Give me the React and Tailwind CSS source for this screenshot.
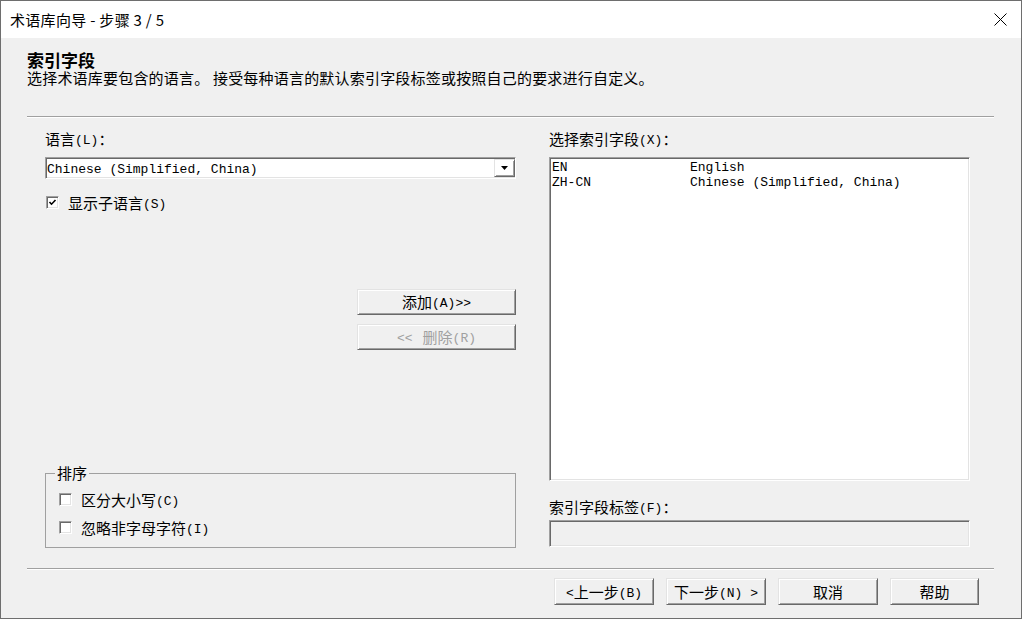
import React from 'react';

// Latin runs in the dialog use a half-width mono face, CJK stays in Noto
const M = ({ children }) => (
  <span className="relative -top-px leading-[0px] font-['Liberation_Mono',monospace] text-[13px]">{children}</span>
);

const sunken =
  'border border-t-[#a0a0a0] border-l-[#a0a0a0] border-b-white border-r-white shadow-[inset_1px_1px_0_#696969,inset_-1px_-1px_0_#e3e3e3]';
const raised =
  'border border-t-[#e3e3e3] border-l-[#e3e3e3] border-b-[#696969] border-r-[#696969] shadow-[inset_1px_1px_0_#ffffff,inset_-1px_-1px_0_#a0a0a0]';

function CheckBox({ checked, label }) {
  return (
    <div className="flex items-center h-[15px] leading-[15px]">
      <div className={`w-[13px] h-[13px] bg-white flex items-center justify-center ${sunken}`}>
        {checked && (
          <svg width="9" height="9" viewBox="0 0 9 9">
            <polyline points="1.5,4 3.5,6.2 7.5,2" fill="none" stroke="#000" strokeWidth="1.6" />
          </svg>
        )}
      </div>
      <span className="ml-[9px]">{label}</span>
    </div>
  );
}

function Button({ children, className = '', disabled }) {
  return (
    <div
      className={`flex items-center justify-center bg-[#f0f0f0] ${raised} ${
        disabled ? 'text-[#a0a0a0]' : 'text-black'
      } ${className}`}
    >
      <span className="leading-[18px] whitespace-pre">{children}</span>
    </div>
  );
}

export default function App() {
  return (
    <div className="w-[1022px] h-[619px] border border-[#6e6e6e] flex flex-col font-['Noto_Sans_CJK_SC',sans-serif] text-[15px] text-black bg-[#f0f0f0]">
      {/* title bar */}
      <div className="h-[37px] bg-white flex items-center justify-between pl-[9px] pr-[14px]">
        <span className="leading-[20px] tracking-[0.3px]">术语库向导 - 步骤 3 / 5</span>
        <svg width="13" height="13" viewBox="0 0 13 13">
          <path d="M0.5 0.5 L12.5 12.5 M12.5 0.5 L0.5 12.5" stroke="#000" strokeWidth="1" />
        </svg>
      </div>

      <div className="flex-1 flex flex-col pl-[26px] pr-[27px]">
        {/* header */}
        <div className="pt-[13px]">
          <div className="font-bold text-[17px] leading-[18px]">索引字段</div>
          <div className="leading-[18px] tracking-[0.2px]">
            选择术语库要包含的语言。 接受每种语言的默认索引字段标签或按照自己的要求进行自定义。
          </div>
        </div>
        <div className="mt-[29px] h-[2px] border-t border-t-[#a0a0a0] border-b border-b-white" />

        {/* main area */}
        <div className="h-[430px] flex items-start">
          {/* left column */}
          <div className="ml-[18px] w-[471px] flex flex-col">
            <div className="mt-[12px] leading-[18px]">
              语言<M>(L)</M>：
            </div>
            <div className={`mt-[9px] h-[22px] bg-white flex items-center ${sunken}`}>
              <span className="flex-1 pl-[1px] leading-[18px]">
                <M>Chinese (Simplified, China)</M>
              </span>
              <div className={`w-[21px] h-[18px] flex items-center justify-center ${raised}`}>
                <svg width="7" height="4" viewBox="0 0 7 4">
                  <polygon points="0,0 7,0 3.5,4" fill="#000" />
                </svg>
              </div>
            </div>
            <div className="mt-[16px] pl-[1px]">
              <CheckBox
                checked
                label={
                  <>
                    显示子语言<M>(S)</M>
                  </>
                }
              />
            </div>

            <Button className="self-end mt-[79px] w-[159px] h-[26px]">
              添加<M>(A)&gt;&gt;</M>
            </Button>
            <Button disabled className="self-end mt-[9px] w-[159px] h-[26px]">
              <M>&lt;&lt;</M>
              <span className="ml-[10px]">删除</span>
              <M>(R)</M>
            </Button>

            {/* sort group */}
            <div className="relative mt-[123px] h-[75px] border border-[#a0a0a0] pt-[18px] pl-[13px] flex flex-col gap-[13px]">
              <span className="absolute -top-[10px] left-[9px] px-[2px] bg-[#f0f0f0] leading-[18px]">排序</span>
              <CheckBox
                label={
                  <>
                    区分大小写<M>(C)</M>
                  </>
                }
              />
              <CheckBox
                label={
                  <>
                    忽略非字母字符<M>(I)</M>
                  </>
                }
              />
            </div>
          </div>

          {/* right column */}
          <div className="ml-[33px] w-[421px] flex flex-col">
            <div className="mt-[12px] leading-[18px]">
              选择索引字段<M>(X)</M>：
            </div>
            <div className={`mt-[9px] h-[324px] bg-white pl-[2px] ${sunken}`}>
              {[
                ['EN', 'English'],
                ['ZH-CN', 'Chinese (Simplified, China)'],
              ].map(([code, name]) => (
                <div key={code} className="flex h-[15px] leading-[15px]">
                  <span className="w-[138px]">
                    <M>{code}</M>
                  </span>
                  <span>
                    <M>{name}</M>
                  </span>
                </div>
              ))}
            </div>
            <div className="mt-[17px] leading-[18px]">
              索引字段标签<M>(F)</M>：
            </div>
            <div className={`mt-[4px] h-[27px] bg-[#f0f0f0] ${sunken}`} />
          </div>
        </div>

        <div className="mt-[20px] h-[2px] border-t border-t-[#a0a0a0] border-b border-b-white" />

        {/* footer buttons */}
        <div className="mt-[8px] flex justify-end gap-[12px] mr-[15px]">
          <Button className="w-[100px] h-[27px]">
            <M>&lt;</M>上一步<M>(B)</M>
          </Button>
          <Button className="w-[100px] h-[27px]">
            下一步<M>(N) &gt;</M>
          </Button>
          <Button className="w-[100px] h-[27px]">取消</Button>
          <Button className="w-[89px] h-[27px]">帮助</Button>
        </div>
      </div>
    </div>
  );
}
